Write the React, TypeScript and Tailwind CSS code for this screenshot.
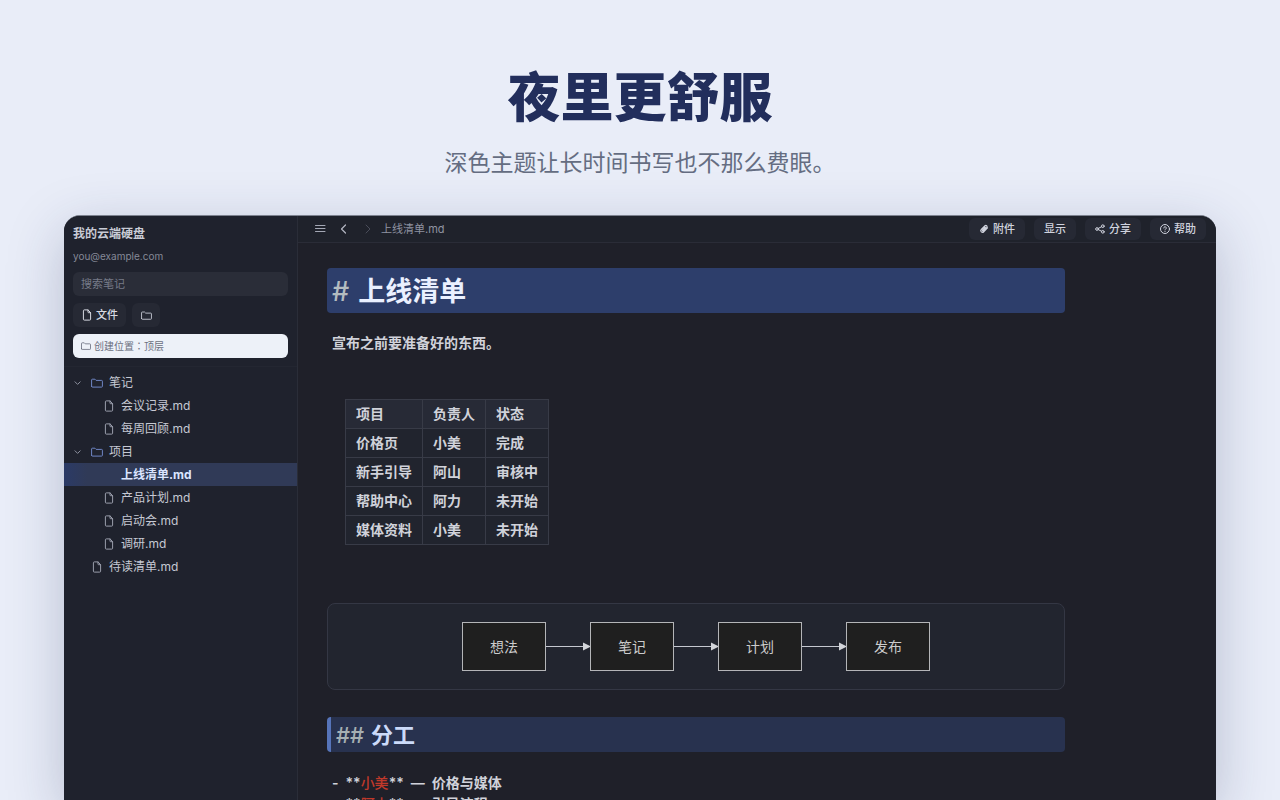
import type { ReactNode } from 'react';

type TreeItem = {
    name: string;
    kind: 'folder' | 'file';
    nested?: boolean;
    active?: boolean;
};

const TREE: TreeItem[] = [
    { name: '笔记', kind: 'folder' },
    { name: '会议记录.md', kind: 'file', nested: true },
    { name: '每周回顾.md', kind: 'file', nested: true },
    { name: '项目', kind: 'folder' },
    { name: '上线清单.md', kind: 'file', nested: true, active: true },
    { name: '产品计划.md', kind: 'file', nested: true },
    { name: '启动会.md', kind: 'file', nested: true },
    { name: '调研.md', kind: 'file', nested: true },
    { name: '待读清单.md', kind: 'file' },
];

const COLUMNS = ['项目', '负责人', '状态'];

const ROWS = [
    ['价格页', '小美', '完成'],
    ['新手引导', '阿山', '审核中'],
    ['帮助中心', '阿力', '未开始'],
    ['媒体资料', '小美', '未开始'],
];

const STEPS = ['想法', '笔记', '计划', '发布'];

const DUTIES = [
    { who: '小美', what: '价格与媒体' },
    { who: '阿山', what: '引导流程' },
];

/** Shared 12-unit stroke icon; every glyph in the app is drawn on this grid. */
function Icon({ children, className = 'size-3' }: { children: ReactNode; className?: string }) {
    return (
        <svg
            viewBox="0 0 12 12"
            fill="none"
            stroke="currentColor"
            strokeLinecap="round"
            strokeLinejoin="round"
            aria-hidden="true"
            className={`shrink-0 ${className}`}
        >
            {children}
        </svg>
    );
}

function FileIcon({ className }: { className?: string }) {
    return (
        <Icon className={className}>
            <path d="M7 .9H3.3a.9.9 0 0 0-.9.9v8.4a.9.9 0 0 0 .9.9h5.4a.9.9 0 0 0 .9-.9V3.7L7 .9v2.2a.6.6 0 0 0 .6.6h2" />
        </Icon>
    );
}

function FolderIcon({ className }: { className?: string }) {
    return (
        <Icon className={className}>
            <path d="M.6 9.3V3a.8.8 0 0 1 .8-.8h2.5l1.2 1.2h5.5a.8.8 0 0 1 .8.8v5.1a.8.8 0 0 1-.8.8H1.4a.8.8 0 0 1-.8-.8Z" />
        </Icon>
    );
}

function ToolButton({ icon, label }: { icon?: ReactNode; label: string }) {
    return (
        <button
            type="button"
            className="flex h-[22px] items-center gap-1 rounded-md bg-[#262934] px-2.5 text-[11px] font-medium text-[#d0d3de]"
        >
            {icon}
            {label}
        </button>
    );
}

function Sidebar() {
    return (
        <aside className="w-[234px] shrink-0 border-r border-[#2a2d38] bg-[#1f222d]">
            <div className="flex flex-col border-b border-[#232631] px-[9px] pt-2 pb-2">
                <h2 className="text-[12px] leading-5 font-bold text-[#c9ccd6]">我的云端硬盘</h2>
                <p className="mt-0.5 text-[10px] leading-5 text-[#858997]">you@example.com</p>
                <input
                    type="search"
                    aria-label="搜索笔记"
                    placeholder="搜索笔记"
                    className="mt-1.5 h-6 w-full rounded-md bg-[#2a2d38] px-2 text-[11px] text-[#d0d3de] placeholder:text-[#777b88]"
                />
                <div className="mt-[7px] flex gap-1.5">
                    <button
                        type="button"
                        className="flex h-6 items-center gap-[3px] rounded-md bg-[#262934] px-2 text-[11px] font-medium text-[#d8dae3]"
                    >
                        <FileIcon />
                        文件
                    </button>
                    <button
                        type="button"
                        aria-label="文件夹"
                        className="flex h-6 w-7 items-center justify-center rounded-md bg-[#262934] text-[#c4c7d2]"
                    >
                        <FolderIcon className="size-[11px]" />
                    </button>
                </div>
                <div className="mt-[7px] flex h-6 items-center gap-[3px] rounded-md bg-[#edf1f8] px-2 text-[10px] text-[#6b7080]">
                    <FolderIcon className="size-[10px]" />
                    <span>
                        创建位置<span className="font-['Noto_Sans_CJK_TC',sans-serif]" lang="zh-TW">：</span>顶层
                    </span>
                </div>
            </div>
            <nav aria-label="文件" className="pt-1">
                <ul>
                    {TREE.map((item) => (
                        <li key={item.name}>
                            <a
                                href="#"
                                className={`flex h-[23px] items-center gap-1.5 pl-[9px] text-[12px] ${
                                    item.active
                                        ? 'bg-linear-to-r from-[#2b3a66] to-[#303a57] to-10% font-bold text-[#dbe5ff]'
                                        : 'text-[#c6c9d3]'
                                }`}
                            >
                                {item.kind === 'folder' ? (
                                    <Icon className="size-3 text-[#8c909e]">
                                        <path d="M2 4.8 4.6 7.4l2.6-2.6" />
                                    </Icon>
                                ) : (
                                    <span className={item.nested ? 'w-6' : 'w-3'} />
                                )}
                                {item.kind === 'folder' && <FolderIcon className="size-3 text-[#6f86c4]" />}
                                {item.kind === 'file' && !item.active && (
                                    <FileIcon className="size-3 text-[#9a9eac]" />
                                )}
                                {item.active && <span className="size-3" />}
                                {item.name}
                            </a>
                        </li>
                    ))}
                </ul>
            </nav>
        </aside>
    );
}

function TopBar() {
    return (
        <header className="flex h-[27px] items-center border-b border-[#2a2c37] bg-[#1f222b] px-2.5">
            <div className="flex flex-1 items-center">
                <button type="button" aria-label="菜单" className="flex w-6 justify-center text-[#a4a8b5]">
                    <Icon>
                        <path d="M1.5 2.5h9.5M1.5 5.5h9.5M1.5 8.5h9.5" />
                    </Icon>
                </button>
                <button type="button" aria-label="后退" className="flex w-6 justify-center text-[#b4b7c3]">
                    <Icon>
                        <path d="M7.5 2 3.5 6l4 4" strokeWidth="1.2" />
                    </Icon>
                </button>
                <button
                    type="button"
                    aria-label="前进"
                    disabled
                    className="flex w-6 justify-center text-[#4a4d5a]"
                >
                    <Icon>
                        <path d="m4 2 4 4-4 4" />
                    </Icon>
                </button>
                <span className="pl-px text-[11px] text-[#8f93a1]">上线清单.md</span>
            </div>
            <div className="flex gap-[9px]">
                <ToolButton
                    label="附件"
                    icon={
                        <Icon className="size-[10px]">
                            <path
                                d="m10.2 4.6-4.5 4.8a2 2 0 0 1-3-2.8l4.5-4.5a1.5 1.5 0 0 1 2.2 2L5.2 8.2a.6.6 0 0 1-1-.8l3.4-3.5"
                                strokeWidth="1.4"
                            />
                        </Icon>
                    }
                />
                <ToolButton label="显示" />
                <ToolButton
                    label="分享"
                    icon={
                        <Icon className="size-[10px]">
                            <circle cx="2.4" cy="6" r="1.6" strokeWidth="1.2" />
                            <circle cx="9.4" cy="2.6" r="1.6" strokeWidth="1.2" />
                            <circle cx="9.4" cy="9.4" r="1.6" strokeWidth="1.2" />
                            <path d="m3.9 5.3 4-2M3.9 6.7l4 2" strokeWidth="1.2" />
                        </Icon>
                    }
                />
                <ToolButton
                    label="帮助"
                    icon={
                        <Icon className="size-[10px]">
                            <circle cx="6" cy="6" r="5.4" strokeWidth="1.2" />
                            <path
                                d="M4.5 4.8a1.5 1.5 0 1 1 2.2 1.3c-.5.3-.7.5-.7 1M6 8.9v.1"
                                strokeWidth="1.2"
                            />
                        </Icon>
                    }
                />
            </div>
        </header>
    );
}

function Arrow() {
    return (
        <svg viewBox="0 0 44 9" className="h-[9px] w-11 shrink-0" aria-hidden="true">
            <path d="M0 4.5h38" stroke="#c5c8d0" />
            <path d="M37 .5v8l8-4z" fill="#d3d5da" />
        </svg>
    );
}

function Note() {
    return (
        <article className="mr-[151px] ml-[29px] pt-[25px] text-[14px] leading-[21px] font-semibold text-[#d0d2da]">
            <h1 className="flex h-[45px] items-center gap-[9px] rounded bg-[#2d3e6b] px-[5px] pt-0.5 text-[27px] font-bold text-[#eaf0ff]">
                <span className="font-medium text-[#b4bcc0]">#</span>
                上线清单
            </h1>
            <p className="mt-[19px] px-[5px]">宣布之前要准备好的东西。</p>

            <table className="mt-[46px] ml-[18px] border-collapse bg-[#21242e] text-left">
                <thead>
                    <tr className="h-[29px] bg-[#272a36]">
                        {COLUMNS.map((column) => (
                            <th
                                key={column}
                                className="border border-[#383b47] px-2.5 pb-0.5 font-semibold"
                            >
                                {column}
                            </th>
                        ))}
                    </tr>
                </thead>
                <tbody>
                    {ROWS.map((row) => (
                        <tr key={row[0]} className="h-[29px]">
                            {row.map((cell, index) => (
                                <td key={COLUMNS[index]} className="border border-[#383b47] px-2.5 pb-0.5">
                                    {cell}
                                </td>
                            ))}
                        </tr>
                    ))}
                </tbody>
            </table>

            <div className="mt-[58px] flex h-[87px] items-center justify-center rounded-lg border border-[#343744] bg-[#22252f]">
                {STEPS.map((step, index) => (
                    <div key={step} className="flex items-center">
                        {index > 0 && <Arrow />}
                        <div className="flex h-[49px] w-[84px] items-center justify-center border border-[#b4b5b8] bg-[#1f1f1f] font-normal text-[#cccccc]">
                            {step}
                        </div>
                    </div>
                ))}
            </div>

            <h2 className="mt-[27px] flex h-[35px] items-center gap-[7px] rounded-sm border-l-4 border-[#5674b9] bg-[#28324f] px-[5px] pt-0.5 text-[22px] font-bold text-[#cbdaf9]">
                <span className="font-medium text-[#a5afb3]">##</span>
                分工
            </h2>
            <ul className="mt-5 px-[5px]">
                {DUTIES.map((duty) => (
                    <li key={duty.who} className="flex gap-[7px]">
                        <span>-</span>
                        <span>
                            **<span className="font-medium text-[#c0392b]">{duty.who}</span>**
                        </span>
                        <span>—</span>
                        <span>{duty.what}</span>
                    </li>
                ))}
            </ul>
        </article>
    );
}

export default function App() {
    return (
        <main className="flex h-screen flex-col overflow-hidden bg-[#e9edf8] px-16 pt-[63px] font-['Inter','Noto_Sans_CJK_SC',sans-serif]">
            <div className="text-center">
                <h1 className="text-[53px] leading-[70px] font-black text-[#222e5c]">夜里更舒服</h1>
                <p className="mt-3.5 text-[23px] leading-8 text-[#656d82]">
                    深色主题让长时间书写也不那么费眼。
                </p>
            </div>
            <div className="mt-9 flex min-h-0 flex-1 overflow-hidden rounded-t-2xl border-t border-[#7d828f] bg-[#1f2029] shadow-[0_16px_56px_rgba(34,46,92,0.25)]">
                <Sidebar />
                <section className="min-w-0 flex-1">
                    <TopBar />
                    <Note />
                </section>
            </div>
        </main>
    );
}
